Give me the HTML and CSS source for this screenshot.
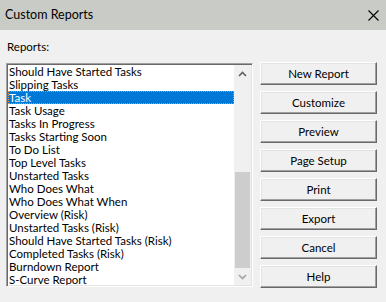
FILE: index.html
```html
<!DOCTYPE html>
<html>
<head>
<meta charset="utf-8">
<link rel="stylesheet" href="styles.css">
</head>
<body>
<div class="window">
  <div class="titlebar">
    <span class="title">Custom Reports</span>
    <svg class="close" width="11" height="11" viewBox="0 0 11 11"><path d="M0.5 0.5 L10.5 10.5 M10.5 0.5 L0.5 10.5" stroke="#000" stroke-width="1.1" fill="none"/></svg>
  </div>
  <div class="content">
    <div class="left">
      <div class="label">Reports:</div>
      <div class="listbox">
        <ul class="items">
          <li>Should Have Started Tasks</li>
          <li>Slipping Tasks</li>
          <li class="selected">Task</li>
          <li>Task Usage</li>
          <li>Tasks In Progress</li>
          <li>Tasks Starting Soon</li>
          <li>To Do List</li>
          <li>Top Level Tasks</li>
          <li>Unstarted Tasks</li>
          <li>Who Does What</li>
          <li>Who Does What When</li>
          <li>Overview (Risk)</li>
          <li>Unstarted Tasks (Risk)</li>
          <li>Should Have Started Tasks (Risk)</li>
          <li>Completed Tasks (Risk)</li>
          <li>Burndown Report</li>
          <li>S-Curve Report</li>
        </ul>
        <div class="scrollbar">
          <div class="arrow up"><svg width="9" height="6" viewBox="0 0 9 6"><path d="M1 5 L4.5 1.5 L8 5" stroke="#606060" stroke-width="1.6" fill="none"/></svg></div>
          <div class="track"><div class="thumb"></div></div>
          <div class="arrow down"><svg width="9" height="6" viewBox="0 0 9 6"><path d="M1 1 L4.5 4.5 L8 1" stroke="#a3a3a3" stroke-width="1.6" fill="none"/></svg></div>
        </div>
      </div>
    </div>
    <div class="buttons">
      <button class="btn">New Report</button>
      <button class="btn">Customize</button>
      <button class="btn">Preview</button>
      <button class="btn">Page Setup</button>
      <button class="btn">Print</button>
      <button class="btn">Export</button>
      <button class="btn">Cancel</button>
      <button class="btn">Help</button>
    </div>
  </div>
</div>
</body>
</html>
```

FILE: styles.css
```css
* { box-sizing: border-box; }
html, body {
  margin: 0;
  padding: 0;
  background: #f0f0f0;
}
body {
  font-family: Lato, "Liberation Sans", sans-serif;
  font-size: 11.5px;
  color: #000;
  width: 386px;
  height: 302px;
  overflow: hidden;
}
.titlebar {
  height: 30px;
  background: #c9cbc7;
  display: flex;
  align-items: center;
  justify-content: space-between;
  padding: 0 7px 0 5px;
}
.title {
  font-size: 12.5px;
  line-height: 16px;
}
.close { display: block; }
.content {
  display: flex;
  gap: 7px;
  padding-left: 6px;
}
.left {
  display: flex;
  flex-direction: column;
}
.label {
  margin-top: 9px;
  margin-left: 1px;
  line-height: 15px;
  height: 15px;
}
.listbox {
  margin-top: 9px;
  width: 247px;
  height: 224px;
  background: #fff;
  border-style: solid;
  border-width: 1px;
  border-color: #a0a0a0 #ffffff #ffffff #a0a0a0;
  box-shadow: inset 1px 1px 0 #696969, inset -1px -1px 0 #e3e3e3;
  padding: 1px;
  display: flex;
}
.items {
  list-style: none;
  margin: 0;
  padding: 0;
  flex: 1;
  overflow: hidden;
}
.items li {
  height: 13px;
  line-height: 13px;
  padding-left: 1px;
  white-space: nowrap;
}
.items li.selected {
  background: #0078d7;
  color: #fff;
  outline: 1px dotted #ff8c28;
  outline-offset: -1px;
}
.scrollbar {
  width: 17px;
  display: flex;
  flex-direction: column;
  background: #f0f0f0;
}
.arrow {
  height: 17px;
  display: flex;
  align-items: center;
  justify-content: center;
}
.track {
  flex: 1;
  display: flex;
  flex-direction: column;
  justify-content: flex-end;
}
.thumb {
  height: 96px;
  margin: 0 1px;
  background: #cdcdcd;
}
.buttons {
  display: flex;
  flex-direction: column;
  gap: 6px;
  padding-top: 32px;
}
.btn {
  width: 117px;
  height: 23px;
  margin: 0;
  padding: 0;
  font-family: inherit;
  font-size: 11.5px;
  color: #000;
  background: #f0f0f0;
  border-style: solid;
  border-width: 1px;
  border-color: #ffffff #696969 #696969 #ffffff;
  box-shadow: inset -1px -1px 0 #a0a0a0, inset 1px 1px 0 #e3e3e3;
}
```
